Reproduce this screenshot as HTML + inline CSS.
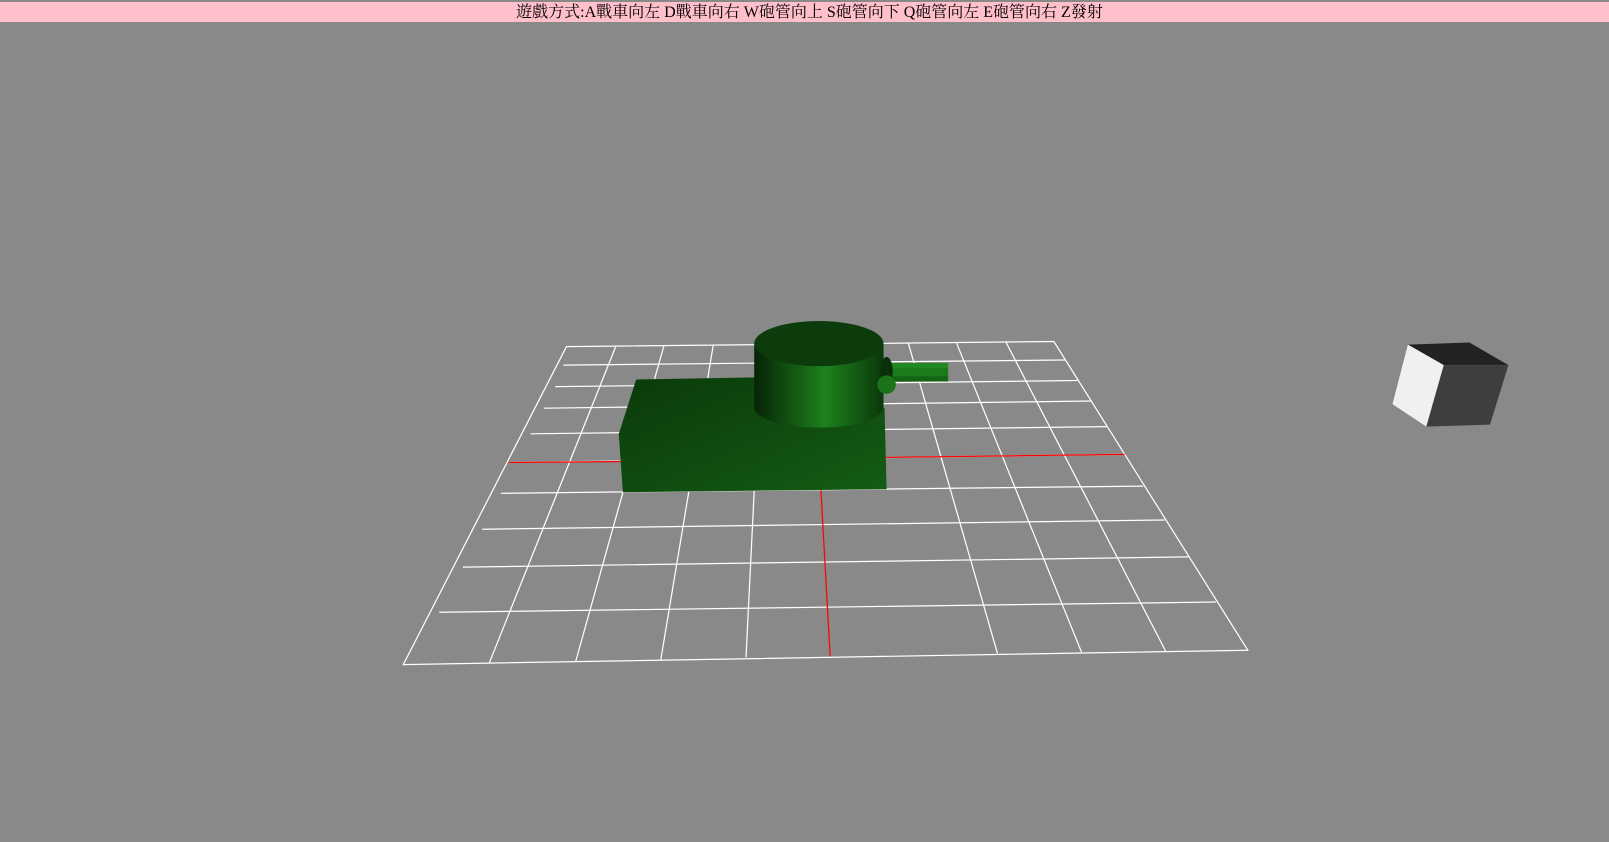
<!DOCTYPE html>
<html><head><meta charset="utf-8"><style>
html,body{margin:0;padding:0;background:#898989;width:1609px;height:842px;overflow:hidden}
#bar{position:absolute;left:0;top:2px;width:1609px;height:20px;background:#ffc0cb;text-align:center;font:16px/21px "Liberation Serif","Noto Serif CJK SC",serif;color:#000;box-sizing:border-box;padding-left:10px}
svg{position:absolute;left:0;top:0}
</style></head><body>
<div id="bar">遊戲方式:A戰車向左 D戰車向右 W砲管向上 S砲管向下 Q砲管向左 E砲管向右 Z發射</div>
<svg width="1609" height="842" viewBox="0 0 1568 821" preserveAspectRatio="none">
<defs>
<linearGradient id="cyl" x1="0" x2="1" y1="0" y2="0">
<stop offset="0" stop-color="#062306"/><stop offset="0.55" stop-color="#1d821d"/><stop offset="1" stop-color="#0a380a"/></linearGradient>
<linearGradient id="box" x1="0" x2="1" y1="0" y2="1">
<stop offset="0" stop-color="#0a3a0a"/><stop offset="1" stop-color="#145c14"/></linearGradient>
</defs>
<g stroke="#fff" stroke-width="1.2" fill="none">
<polygon points="552,338 1027,333 1216,634 393,648"/>
<line x1="549" y1="356" x2="1038" y2="351"/>
<line x1="541" y1="377" x2="1050" y2="371"/>
<line x1="530" y1="398" x2="1064" y2="391"/>
<line x1="517" y1="423" x2="1079" y2="416"/>
<line x1="496" y1="451" x2="1096" y2="443"/>
<line x1="488" y1="481" x2="1114" y2="474"/>
<line x1="470" y1="516" x2="1135" y2="507"/>
<line x1="451" y1="553" x2="1158" y2="543"/>
<line x1="428" y1="597" x2="1185" y2="587"/>
<line x1="600" y1="338" x2="477" y2="646"/>
<line x1="647" y1="337" x2="561" y2="645"/>
<line x1="695" y1="337" x2="644" y2="643"/>
<line x1="742" y1="336" x2="727" y2="641"/>
<line x1="885" y1="334" x2="972" y2="637"/>
<line x1="932" y1="334" x2="1054" y2="636"/>
<line x1="980" y1="333" x2="1136" y2="635"/>
</g>
<g stroke="#f00" stroke-width="1.2">
<line x1="496" y1="451" x2="610" y2="450"/>
<line x1="860" y1="446" x2="1096" y2="443"/>
<line x1="800" y1="478" x2="809" y2="640"/>
</g>
<polygon points="620,370 736,368 862,398 864,477 607,480 603,423" fill="url(#box)"/>
<rect x="735" y="335" width="126" height="62" fill="url(#cyl)"/>
<ellipse cx="798" cy="397" rx="63" ry="20" fill="url(#cyl)"/>
<ellipse cx="798" cy="335" rx="63" ry="22" fill="#0c3b0c"/>
<rect x="866" y="354" width="58" height="18" fill="#1b7a1b"/>
<rect x="866" y="354" width="58" height="5" fill="#23922a" opacity=".6"/>
<rect x="866" y="367" width="58" height="5" fill="#125a12" opacity=".7"/>
<ellipse cx="864" cy="362" rx="6" ry="14" fill="#0a300a"/>
<circle cx="864" cy="375" r="9" fill="#1a741a"/>
<polygon points="1372,336 1432,334 1470,356 1407,356" fill="#222"/>
<polygon points="1372,336 1407,356 1390,416 1357,394" fill="#f0f0f0"/>
<polygon points="1407,356 1470,356 1452,414 1390,416" fill="#3e3e3e"/>
</svg>
</body></html>
